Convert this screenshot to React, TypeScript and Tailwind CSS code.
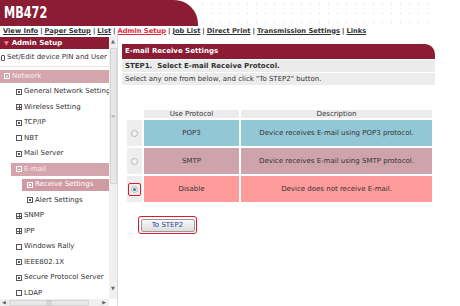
import { ReactNode } from 'react';

type Box = 'plus' | 'minus' | 'dot' | 'empty';

interface TreeItem {
  label: string;
  box: Box;
  indent: number;
  active?: 'section' | 'page';
}

const tree: TreeItem[] = [
  { label: 'Network', box: 'minus', indent: 0, active: 'section' },
  { label: 'General Network Setting', box: 'dot', indent: 1 },
  { label: 'Wireless Setting', box: 'plus', indent: 1 },
  { label: 'TCP/IP', box: 'dot', indent: 1 },
  { label: 'NBT', box: 'empty', indent: 1 },
  { label: 'Mail Server', box: 'dot', indent: 1 },
  { label: 'E-mail', box: 'minus', indent: 1, active: 'section' },
  { label: 'Receive Settings', box: 'dot', indent: 2, active: 'page' },
  { label: 'Alert Settings', box: 'dot', indent: 2 },
  { label: 'SNMP', box: 'plus', indent: 1 },
  { label: 'IPP', box: 'plus', indent: 1 },
  { label: 'Windows Rally', box: 'empty', indent: 1 },
  { label: 'IEEE802.1X', box: 'dot', indent: 1 },
  { label: 'Secure Protocol Server', box: 'dot', indent: 1 },
  { label: 'LDAP', box: 'empty', indent: 1 },
];

const navLinks = ['View Info', 'Paper Setup', 'List', 'Admin Setup', 'Job List', 'Direct Print', 'Transmission Settings', 'Links'];

const protocols = [
  { name: 'POP3', desc: 'Device receives E-mail using POP3 protocol.', bg: 'bg-[#93c7d5]', checked: false },
  { name: 'SMTP', desc: 'Device receives E-mail using SMTP protocol.', bg: 'bg-[#cfa3ab]', checked: false },
  { name: 'Disable', desc: 'Device does not receive E-mail.', bg: 'bg-[#ff9b9b]', checked: true },
];

function TreeBox({ kind, light }: { kind: Box; light?: boolean }) {
  const border = light ? 'border-white' : 'border-[#555]';
  const mark = light ? 'bg-white' : 'bg-[#555]';
  return (
    <span className={`relative inline-block w-[6px] h-[6px] border ${border} shrink-0`}>
      {kind === 'minus' && <span className={`absolute left-[1px] top-[1.5px] w-[2px] h-px ${mark}`} />}
      {kind === 'plus' && (
        <>
          <span className={`absolute left-0 top-[2px] w-[4px] h-px ${mark}`} />
          <span className={`absolute left-[1.5px] top-0 w-px h-[4px] ${mark}`} />
        </>
      )}
      {kind === 'dot' && <span className={`absolute left-[1px] top-[1px] w-[2px] h-[2px] ${mark}`} />}
    </span>
  );
}

function Radio({ checked }: { checked: boolean }) {
  return (
    <span className="inline-flex items-center justify-center w-[7px] h-[7px] rounded-full border border-[#b5b5b5] bg-[#f4f4f4]">
      {checked && <span className="w-[3px] h-[3px] rounded-full bg-[#2f7fb8]" />}
    </span>
  );
}

function Cell({ className, children }: { className: string; children?: ReactNode }) {
  return <div className={`flex items-center justify-center ${className}`}>{children}</div>;
}

export default function App() {
  return (
    <div className="w-[460px] h-[306px] overflow-hidden bg-white text-[7px] text-[#333] font-['DejaVu_Sans',sans-serif] leading-none">
      {/* top banner */}
      <div className="flex h-[26px]">
        <div className="w-[198px] bg-[#8a1d33] rounded-tr-[24px] flex items-center pl-[4px]">
          <span className="inline-block origin-left scale-x-[0.75] text-white font-bold text-[15px]">MB472</span>
        </div>
        <div className="flex-1 bg-[radial-gradient(circle,#d6d6d6_0.8px,transparent_1px)] bg-[length:9px_9px] mr-[28px]" />
      </div>

      {/* nav */}
      <div className="h-[10px] pl-[3px] flex items-center font-bold text-[6.7px] whitespace-nowrap">
        {navLinks.map((l, i) => (
          <span key={l} className="flex">
            <span className={`underline ${l === 'Admin Setup' ? 'text-[#e0283c]' : 'text-[#333]'}`}>{l}</span>
            {i < navLinks.length - 1 && <span className="mx-[2px]">{l === 'Transmission Settings' ? '|' : ' | '}</span>}
          </span>
        ))}
      </div>

      <div className="flex h-[270px]">
        {/* left menu */}
        <div className="w-[118px] flex flex-col border-r border-[#dcdcdc]">
          <div className="flex flex-1 min-h-0">
            <div className="w-[109px] overflow-hidden pt-[1px]">
              <div className="h-[12px] bg-[#8a1d33] flex items-center pl-[4px] gap-[3px] text-white font-bold text-[7px]">
                <span className="text-[#ff7d8c] text-[6px]">▼</span>
                <span>Admin Setup</span>
              </div>
              <div className="h-[18px] flex items-center pl-[1px] gap-[2px] border-b border-[#e6e6e6] whitespace-nowrap">
                <span className="inline-block w-[4px] h-[6px] border border-[#555] rounded-[1px]" />
                <span>Set/Edit device PIN and User</span>
              </div>
              {tree.map((t) => {
                const left = t.indent === 0 ? 'ml-0 pl-[4px]' : t.indent === 1 ? (t.active ? 'ml-[11px] pl-[5px]' : 'pl-[16px]') : t.active ? 'ml-[22px] pl-[5px]' : 'pl-[27px]';
                return (
                  <div
                    key={t.label}
                    className={`h-[12.5px] mt-[3px] flex items-center gap-[2px] whitespace-nowrap ${left} ${t.active === 'section' ? 'bg-[#d4a5ad] text-[#fbeef0]' : t.active === 'page' ? 'bg-[#d09aa3] text-white' : ''}`}
                  >
                    <TreeBox kind={t.box} light={!!t.active} />
                    <span>{t.label}</span>
                  </div>
                );
              })}
            </div>
            {/* vertical scrollbar */}
            <div className="w-[8px] bg-[#f0f0f0] flex flex-col items-center">
              <span className="text-[5px] text-[#666] mt-[3px]">▲</span>
              <div className="mt-[4px] w-[7px] h-[136px] bg-[#e8e8e8] border border-[#d4d4d4] rounded-[1px] flex items-center justify-center">
                <span className="text-[5px] text-[#999]">≡</span>
              </div>
              <div className="flex-1" />
              <span className="text-[5px] text-[#666] mb-[8px]">▼</span>
            </div>
          </div>
          {/* horizontal scrollbar */}
          <div className="h-[7px] w-[109px] bg-[#f0f0f0] flex items-center">
            <span className="text-[5px] text-[#666] ml-[2px]">◀</span>
            <div className="ml-[3px] w-[80px] h-[6px] bg-[#e8e8e8] border border-[#d4d4d4] rounded-[1px] flex items-center justify-center">
              <span className="text-[5px] text-[#999]">|||</span>
            </div>
            <div className="flex-1" />
            <span className="text-[5px] text-[#666] mr-[3px]">▶</span>
          </div>
        </div>

        {/* main */}
        <div className="flex-1 pl-[4px] pt-[8px]">
          <div className="w-[313px]">
            <div className="h-[15px] bg-[#8a1d33] rounded-tr-[10px] flex items-center pl-[3px] text-white font-bold">
              E-mail Receive Settings
            </div>
            <div className="h-[12px] mt-[1px] bg-[#ebebeb] flex items-center pl-[3px] font-bold">
              STEP1.&nbsp; Select E-mail Receive Protocol.
            </div>
            <div className="h-[12px] mt-[1px] bg-[#ececec] flex items-center pl-[3px]">
              Select any one from below, and click "To STEP2" button.
            </div>

            <div className="mt-[25px] ml-[5px] grid grid-cols-[15px_95px_191px] gap-x-[2px] gap-y-[2px]">
              <div />
              <Cell className="h-[8px] bg-[#ececec]">Use Protocol</Cell>
              <Cell className="h-[8px] bg-[#ececec]">Description</Cell>
              {protocols.map((p) => (
                <div key={p.name} className="contents">
                  <Cell className="h-[26px] bg-[#eeeeee]">
                    {p.checked ? (
                      <span className="w-[13px] h-[13px] rounded-[2px] border-[1.5px] border-[#e0182d] flex items-center justify-center">
                        <Radio checked />
                      </span>
                    ) : (
                      <Radio checked={false} />
                    )}
                  </Cell>
                  <Cell className={`h-[26px] ${p.bg}`}>{p.name}</Cell>
                  <Cell className={`h-[26px] ${p.bg}`}>{p.desc}</Cell>
                </div>
              ))}
            </div>

            <div className="mt-[14px] ml-[16px] inline-flex p-[1.5px] border-[1.5px] border-[#e0182d] rounded-[3px]">
              <button className="w-[54px] h-[13px] bg-[linear-gradient(#fafafa,#dcdcdc)] border border-[#9a9a9a] rounded-[2px] text-[#2e3a9a] text-[7px] font-['DejaVu_Sans',sans-serif]">
                To STEP2
              </button>
            </div>
          </div>
        </div>
      </div>
    </div>
  );
}
